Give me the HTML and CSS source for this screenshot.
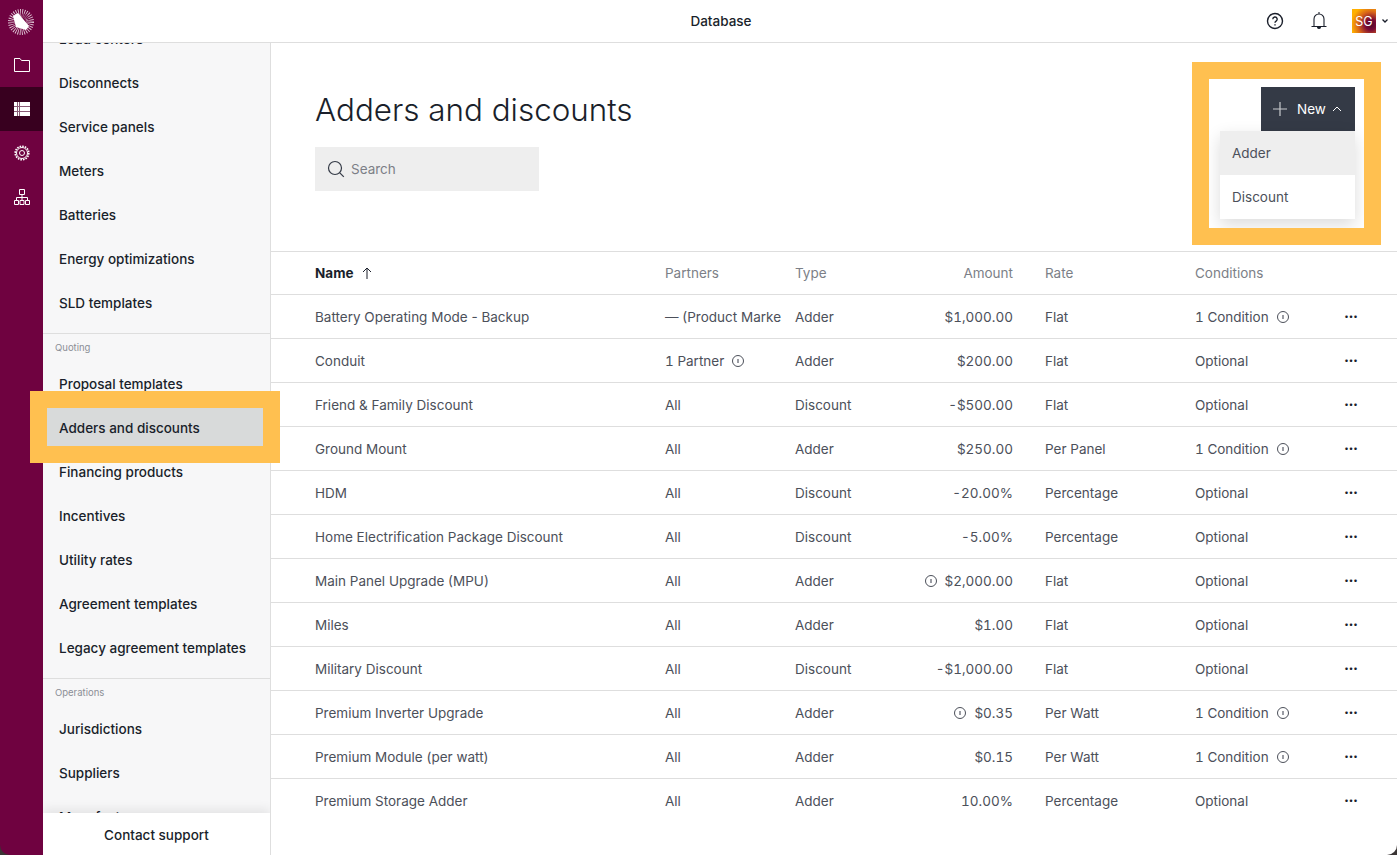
FILE: index.html
```html
<!DOCTYPE html>
<html lang="en">
<head>
  <meta charset="UTF-8">
  <title>Adders and discounts</title>
  <link rel="stylesheet" href="styles.css">
</head>
<body>
  <div class="app">
    <nav class="rail">
      <div class="rail-logo">
        <svg width="30" height="30" viewBox="0 0 30 30">
          <circle cx="15" cy="15" r="9" fill="none" stroke="#fff" stroke-width="8" stroke-dasharray="0.7 1.1" opacity="0.8"/>
          <path d="M7 9 L12 6 L23 19 L20 23 L10 20 Z" fill="#fff"/>
          <path d="M14 6.5 L21 7.5 L24 15 Z" fill="#6f0240" opacity="0.45"/>
        </svg>
      </div>
      <a class="rail-item">
        <svg width="16" height="14" viewBox="0 0 16 14" fill="none" stroke="#fff" stroke-width="1"><path d="M.5 13.5V.5h5.5l1.5 2h8v11z"/></svg>
      </a>
      <a class="rail-item active">
        <svg width="16" height="14" viewBox="0 0 16 14"><path fill="#fff" d="M0 0h16v14H0z"/><path stroke="#8a5a76" stroke-width="1" d="M0 4.500h16M0 9.500h16M3.500 0v14M5.500 0v14" fill="none"/></svg>
      </a>
      <a class="rail-item">
        <svg width="16" height="16" viewBox="0 0 16 16" fill="none" stroke="#fff"><circle cx="8" cy="8" r="5.500"/><circle cx="8" cy="8" r="2.500"/><circle cx="8" cy="8" r="6.800" stroke-width="1.600" stroke-dasharray="1.600 1.070"/></svg>
      </a>
      <a class="rail-item">
        <svg width="16" height="16" viewBox="0 0 16 16" fill="none" stroke="#fff"><path d="M5.500.5h5v5h-5zM.5 11.500h4v4h-4zM6 11.500h4v4H6zM11.500 11.500h4v4h-4zM8 5.500v6M2.500 11.500v-3h11v3"/></svg>
      </a>
    </nav>

    <div class="main">
      <header class="topbar">
        <div class="topbar-title">Database</div>
        <div class="topbar-icons">
          <svg class="help" width="18" height="18" viewBox="0 0 18 18" fill="none" stroke="#1a1f2b" stroke-width="1.400"><circle cx="9" cy="9" r="7.500"/><path d="M6.800 7.200a2.200 2.200 0 1 1 3.300 1.900c-.7.400-1.100.8-1.100 1.600"/><path d="M9 12.200v1.200"/></svg>
          <svg class="bell" width="16" height="18" viewBox="0 0 16 18" fill="none" stroke="#1a1f2b" stroke-width="1.100"><path d="M8 0v2M3 14V7a5 5 0 0 1 10 0v7M.5 14.500h15"/><path d="M6.500 15a1.500 1.500 0 0 0 3 0z" fill="#1a1f2b"/></svg>
          <div class="avatar">SG</div>
          <svg class="caret" width="8" height="6" viewBox="0 0 8 6" fill="none" stroke="#1a1f2b" stroke-width="1.300"><path d="M1.500 1.500l2.500 2.500 2.500-2.500"/></svg>
        </div>
      </header>

      <div class="body">
        <aside class="subnav">
          <div class="subnav-scroll">
            <a class="nav-item">Load centers</a>
            <a class="nav-item">Disconnects</a>
            <a class="nav-item">Service panels</a>
            <a class="nav-item">Meters</a>
            <a class="nav-item">Batteries</a>
            <a class="nav-item">Energy optimizations</a>
            <a class="nav-item">SLD templates</a>
            <div class="nav-group">Quoting</div>
            <a class="nav-item">Proposal templates</a>
            <a class="nav-item selected">Adders and discounts</a>
            <a class="nav-item">Financing products</a>
            <a class="nav-item">Incentives</a>
            <a class="nav-item">Utility rates</a>
            <a class="nav-item">Agreement templates</a>
            <a class="nav-item">Legacy agreement templates</a>
            <div class="nav-group">Operations</div>
            <a class="nav-item">Jurisdictions</a>
            <a class="nav-item">Suppliers</a>
            <a class="nav-item">Manufacturers</a>
          </div>
          <div class="subnav-footer">Contact support</div>
        </aside>

        <section class="content">
          <div class="page-head">
            <h1>Adders and discounts</h1>
            <div class="search">
              <svg width="18" height="18" viewBox="0 0 18 18" fill="none" stroke="#343a46" stroke-width="1.200"><circle cx="8" cy="8" r="6.500"/><path d="M12.800 12.800l4 4"/></svg>
              <span>Search</span>
            </div>
            <div class="new-wrap">
              <button class="new-btn">
                <svg width="14" height="14" viewBox="0 0 14 14" stroke="#c8cacd" stroke-width="1.200"><path d="M7 0v14M0 7h14"/></svg>
                <span>New</span>
                <svg class="chev" width="10" height="6" viewBox="0 0 10 6" fill="none" stroke="#fff" stroke-width="1"><path d="M1 5l4-4 4 4"/></svg>
              </button>
              <div class="new-menu">
                <div class="menu-item hover">Adder</div>
                <div class="menu-item">Discount</div>
              </div>
            </div>
          </div>

          <div class="table">
            <div class="row head">
              <div class="name">Name <svg width="10" height="12" viewBox="0 0 10 12" fill="none" stroke="#1a1f2b"><path d="M5 12V1M1 5l4-4 4 4"/></svg></div>
              <div>Partners</div><div>Type</div><div class="amount">Amount</div><div>Rate</div><div>Conditions</div><div></div>
            </div>
            <div class="row"><div>Battery Operating Mode - Backup</div><div class="partners">— (Product Marke</div><div>Adder</div><div class="amount">$1,000.00</div><div>Flat</div><div class="has-info">1 Condition <i class="info"></i></div><div class="more">···</div></div>
            <div class="row"><div>Conduit</div><div class="has-info">1 Partner <i class="info"></i></div><div>Adder</div><div class="amount">$200.00</div><div>Flat</div><div>Optional</div><div class="more">···</div></div>
            <div class="row"><div>Friend &amp; Family Discount</div><div>All</div><div>Discount</div><div class="amount">-$500.00</div><div>Flat</div><div>Optional</div><div class="more">···</div></div>
            <div class="row"><div>Ground Mount</div><div>All</div><div>Adder</div><div class="amount">$250.00</div><div>Per Panel</div><div class="has-info">1 Condition <i class="info"></i></div><div class="more">···</div></div>
            <div class="row"><div>HDM</div><div>All</div><div>Discount</div><div class="amount">-20.00%</div><div>Percentage</div><div>Optional</div><div class="more">···</div></div>
            <div class="row"><div>Home Electrification Package Discount</div><div>All</div><div>Discount</div><div class="amount">-5.00%</div><div>Percentage</div><div>Optional</div><div class="more">···</div></div>
            <div class="row"><div>Main Panel Upgrade (MPU)</div><div>All</div><div>Adder</div><div class="amount"><i class="info"></i> $2,000.00</div><div>Flat</div><div>Optional</div><div class="more">···</div></div>
            <div class="row"><div>Miles</div><div>All</div><div>Adder</div><div class="amount">$1.00</div><div>Flat</div><div>Optional</div><div class="more">···</div></div>
            <div class="row"><div>Military Discount</div><div>All</div><div>Discount</div><div class="amount">-$1,000.00</div><div>Flat</div><div>Optional</div><div class="more">···</div></div>
            <div class="row"><div>Premium Inverter Upgrade</div><div>All</div><div>Adder</div><div class="amount"><i class="info"></i> $0.35</div><div>Per Watt</div><div class="has-info">1 Condition <i class="info"></i></div><div class="more">···</div></div>
            <div class="row"><div>Premium Module (per watt)</div><div>All</div><div>Adder</div><div class="amount">$0.15</div><div>Per Watt</div><div class="has-info">1 Condition <i class="info"></i></div><div class="more">···</div></div>
            <div class="row"><div>Premium Storage Adder</div><div>All</div><div>Adder</div><div class="amount">10.00%</div><div>Percentage</div><div>Optional</div><div class="more">···</div></div>
          </div>
        </section>
      </div>
    </div>
  </div>

  <div class="callout callout-nav"></div>
  <div class="callout callout-new"></div>
</body>
</html>
```

FILE: styles.css
```css
* {
  box-sizing: border-box;
}

html, body {
  height: 100%;
}

body {
  margin: 0;
  overflow: hidden;
  background: #3a3535;
  color: #1a1f2b;
  font-family: Inter, "Liberation Sans", sans-serif;
  font-size: 13.5px;
}

.app {
  display: flex;
  height: 855px;
}

/* icon rail */
.rail {
  width: 43px;
  flex: none;
  background: #6f0240;
  border-bottom-left-radius: 10px;
}

.rail-logo {
  height: 43px;
  display: flex;
  align-items: center;
  justify-content: center;
  padding-right: 1px;
}

.rail-item {
  height: 44px;
  display: flex;
  align-items: center;
  justify-content: center;
}

.rail-item.active {
  background: #38001f;
}

.main {
  flex: 1;
  display: flex;
  flex-direction: column;
  background: #fff;
  min-width: 0;
  border-bottom-right-radius: 10px;
  overflow: hidden;
}

/* top bar */
.topbar {
  height: 43px;
  flex: none;
  position: relative;
  display: flex;
  align-items: center;
  justify-content: center;
  background: #fff;
  border-bottom: 1px solid #dedede;
  z-index: 2;
}

.topbar-title {
  font-size: 13.5px;
  font-weight: 500;
  padding-left: 2px;
}

.topbar-icons {
  position: absolute;
  right: 8px;
  top: 9px;
  display: flex;
  align-items: center;
}

.help {
  margin-right: 27px;
}

.bell {
  margin-right: 25px;
}

.avatar {
  width: 24px;
  height: 24px;
  display: flex;
  align-items: center;
  justify-content: center;
  color: #fff;
  font-size: 12.5px;
  background: radial-gradient(circle at 78% 65%, #4a0a2a 0, #7a0a35 22%, #d8641a 52%, #ffb000 80%);
}

.caret {
  margin-left: 5px;
}

.body {
  flex: 1;
  display: flex;
  min-height: 0;
}

/* database nav */
.subnav {
  width: 228px;
  flex: none;
  position: relative;
  overflow: hidden;
  background: #f7f7f8;
  border-right: 1px solid #dedede;
}

.subnav-scroll {
  margin-top: -26px;
}

.nav-item {
  display: flex;
  align-items: center;
  height: 44px;
  padding-left: 16px;
  font-weight: 500;
}

.nav-item.selected {
  background: #d8dada;
  margin: 2px 7px 4px 4px;
  height: 38px;
  padding: 2px 0 0 12px;
}

.nav-group {
  height: 29px;
  margin-top: 8px;
  padding: 8px 0 0 12px;
  border-top: 1px solid #dedede;
  color: #8b8e96;
  font-size: 9.5px;
}

.subnav-footer {
  position: absolute;
  left: 0;
  right: 0;
  bottom: 0;
  height: 42px;
  padding-top: 2px;
  display: flex;
  align-items: center;
  justify-content: center;
  background: #fff;
  font-weight: 500;
  box-shadow: 0 -4px 10px rgba(0, 0, 0, 0.08);
}

/* page */
.content {
  flex: 1;
  min-width: 0;
}

.page-head {
  position: relative;
  height: 208px;
  padding: 46px 0 0 44px;
}

.page-head h1 {
  margin: 0;
  height: 42px;
  font-size: 31.4px;
  line-height: 42px;
  font-weight: 300;
}

.search {
  width: 224px;
  height: 44px;
  margin-top: 16px;
  display: flex;
  align-items: center;
  gap: 6px;
  padding-left: 12px;
  background: #eee;
  color: #7c7f87;
  font-size: 13.5px;
}

.new-wrap {
  position: absolute;
  top: 44px;
  right: 42px;
  width: 135px;
}

.new-btn {
  display: flex;
  align-items: center;
  width: 94px;
  height: 44px;
  margin-left: auto;
  padding: 0 0 0 12px;
  gap: 10px;
  border: 0;
  background: #343a46;
  color: #fff;
  font: inherit;
}

.chev {
  margin-left: -4px;
}

.new-menu {
  background: #fff;
  box-shadow: 0 6px 16px rgba(0, 0, 0, 0.14);
}

.menu-item {
  height: 44px;
  display: flex;
  align-items: center;
  padding-left: 12px;
  color: #4c505a;
}

.menu-item.hover {
  background: #eee;
}

/* table */
.row {
  display: grid;
  grid-template-columns: 350px 130px 120px 130px 150px 140px 1fr;
  align-items: center;
  height: 44px;
  padding-left: 44px;
  border-top: 1px solid #dedede;
  color: #4c505a;
}

.row.head {
  height: 43px;
  color: #7c7f87;
}

.row.head .name {
  color: #1a1f2b;
  font-weight: 700;
  display: flex;
  align-items: center;
  gap: 8px;
}

.partners {
  white-space: nowrap;
}

.amount {
  display: flex;
  align-items: center;
  justify-content: flex-end;
  gap: 8px;
  padding-right: 32px;
  font-variant-numeric: tabular-nums;
}

.has-info {
  display: flex;
  align-items: center;
  gap: 8px;
  font-variant-numeric: tabular-nums;
}

.info {
  display: inline-block;
  position: relative;
  width: 12px;
  height: 12px;
  border: 1px solid #4c505a;
  border-radius: 50%;
}

.info::after {
  content: "";
  position: absolute;
  left: 4px;
  top: 3px;
  width: 2px;
  height: 4px;
  background: #9a9ca3;
}

.more {
  padding-left: 9px;
  font-weight: 700;
  font-size: 15px;
  letter-spacing: -0.5px;
  color: #1a1f2b;
}

/* orange annotation boxes drawn over the screenshot */
.callout {
  position: absolute;
  border: 17px solid #ffc050;
}

.callout-nav {
  left: 30px;
  top: 391px;
  width: 250px;
  height: 72px;
}

.callout-new {
  left: 1192px;
  top: 62px;
  width: 189px;
  height: 183px;
}
```
